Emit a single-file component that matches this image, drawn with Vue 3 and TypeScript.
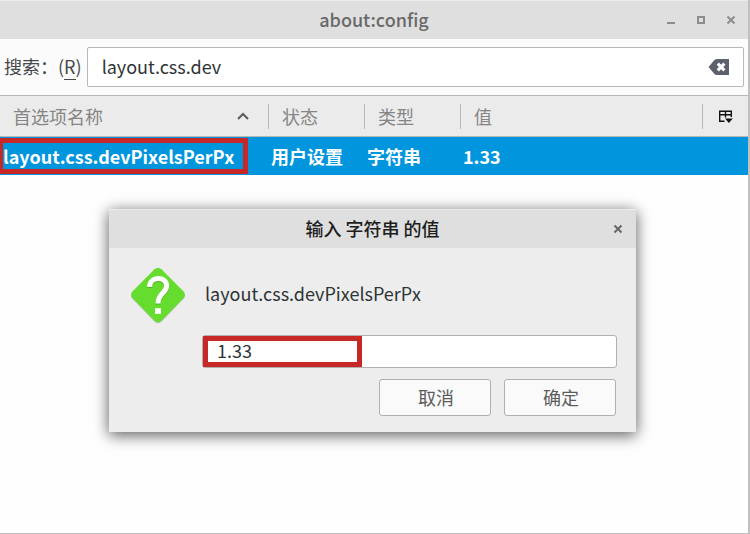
<script setup lang="ts">
import { computed, ref } from 'vue'

interface Preference {
  name: string
  status: string
  type: string
  value: string
}

const preferences: Preference[] = [
  { name: 'layout.css.devPixelsPerPx', status: '用户设置', type: '字符串', value: '1.33' },
]

const query = ref('layout.css.dev')
const draft = ref('1.33')
const visible = computed(() => preferences.filter((p) => p.name.includes(query.value)))
</script>

<template>
  <main class="window">
    <header class="titlebar">
      <h1 class="title">about:config</h1>
      <div class="controls">
        <button type="button" class="icon-button" aria-label="最小化">
          <svg width="10" height="10" viewBox="0 0 10 10"><path d="M1 8h8" /></svg>
        </button>
        <button type="button" class="icon-button" aria-label="最大化">
          <svg width="10" height="10" viewBox="0 0 10 10"><path d="M2 2h6v6H2z" /></svg>
        </button>
        <button type="button" class="icon-button" aria-label="关闭">
          <svg width="10" height="10" viewBox="0 0 10 10"><path d="M1.5 1.5l7 7M8.5 1.5l-7 7" /></svg>
        </button>
      </div>
    </header>

    <div class="toolbar">
      <label for="search" class="search-label">搜索：(<span class="key">R</span>)</label>
      <div class="search-field">
        <input id="search" v-model="query" type="text" accesskey="r" class="search-input" />
        <button type="button" class="icon-button clear" aria-label="清除" @click="query = ''">
          <svg width="22" height="16" viewBox="0 0 22 16">
            <path class="clear-shape" d="M0.5 8L6 1.6Q7 0 9 0H21V16H9Q7 16 6 14.4Z" />
            <path class="clear-cross" d="M9.8 4.6l6.6 6.8M16.4 4.6l-6.6 6.8" />
          </svg>
        </button>
      </div>
    </div>

    <div class="list">
      <table class="prefs">
        <colgroup>
          <col class="col-name" />
          <col class="col-state" />
          <col class="col-type" />
          <col />
          <col class="col-picker" />
        </colgroup>
        <thead>
          <tr>
            <th scope="col">
              <div class="head">
                首选项名称
                <svg width="12" height="8" viewBox="0 0 12 8"><path d="M1 7l5-5 5 5" /></svg>
              </div>
            </th>
            <th scope="col"><div class="head divided">状态</div></th>
            <th scope="col"><div class="head divided">类型</div></th>
            <th scope="col"><div class="head divided">值</div></th>
            <th scope="col">
              <div class="head divided picker-head">
                <button type="button" class="icon-button picker" aria-label="选择要显示的列">
                  <svg width="15" height="13" viewBox="0 0 15 13">
                    <path d="M6.5 11.3H1.7V1.3H13.3V7M1.7 4.7H13.3M7.5 1.3V7.5" />
                    <path class="arrow" d="M7 8.6h7.8L10.9 12.9z" />
                  </svg>
                </button>
              </div>
            </th>
          </tr>
        </thead>
        <tbody>
          <tr v-for="pref in visible" :key="pref.name">
            <td>{{ pref.name }}</td>
            <td>{{ pref.status }}</td>
            <td>{{ pref.type }}</td>
            <td colspan="2">{{ pref.value }}</td>
          </tr>
        </tbody>
      </table>
      <div class="mark mark-row"></div>
    </div>

    <div class="overlay">
      <form class="dialog" role="dialog" aria-labelledby="dialog-title" @submit.prevent>
        <div class="titlebar dialog-bar">
          <h2 id="dialog-title" class="title">输入 字符串 的值</h2>
          <div class="controls">
            <button type="button" class="icon-button" aria-label="关闭">
              <svg width="10" height="10" viewBox="0 0 10 10"><path d="M1.5 1.5l7 7M8.5 1.5l-7 7" /></svg>
            </button>
          </div>
        </div>
        <div class="dialog-body">
          <svg class="question" width="56" height="58" viewBox="0 0 56 58">
            <path class="shade" d="M24.5 3.3Q28 0 31.5 3.3L53.6 25.5Q56.4 29 53.6 32L31.5 54.8Q28 58 24.5 54.8L2.4 32Q-0.4 29 2.4 25.5Z" />
            <path class="diamond" d="M24.5 2.3Q28 -0.8 31.5 2.3L53.6 24.5Q56.4 28 53.6 31L31.5 53.8Q28 57 24.5 53.8L2.4 31Q-0.4 28 2.4 24.5Z" />
            <path class="hook-shade" d="M19.6 21C19.6 9.8 36.6 9.8 36.6 20C36.6 27.2 28 27.4 28 37.4" />
            <path class="hook" d="M19.6 20C19.6 8.8 36.6 8.8 36.6 19C36.6 26.2 28 26.4 28 36.4" />
            <path class="dot" d="M25 41.2h6v5.6h-6z" />
          </svg>
          <div class="fields">
            <label for="value" class="value-label">layout.css.devPixelsPerPx</label>
            <div class="value-field">
              <input id="value" v-model="draft" type="text" class="value-input" />
              <div class="mark mark-value"></div>
            </div>
            <div class="actions">
              <button type="button" class="action">取消</button>
              <button type="submit" class="action">确定</button>
            </div>
          </div>
        </div>
      </form>
    </div>
  </main>
</template>

<style>
body {
  background: #fff;
}
</style>

<style scoped>
.window,
.window * {
  box-sizing: border-box;
}

.window {
  position: relative;
  display: flex;
  flex-direction: column;
  min-height: 100vh;
  border-right: 2px solid #c0c0c0;
  border-bottom: 1px solid #c0c0c0;
  background: #fefefe;
  color: #2e3436;
  font-family: "Noto Sans CJK SC", sans-serif;
  font-size: 18px;
  line-height: 24px;
}

input,
button {
  font: inherit;
  color: inherit;
}

svg {
  display: block;
  fill: none;
  stroke: currentColor;
  stroke-width: 2;
}

.titlebar {
  position: relative;
  display: flex;
  align-items: center;
  justify-content: center;
  height: 39px;
  border-top: 1px solid #ececec;
  background: #dfdfdf;
  color: #696969;
}

.title {
  margin: 0;
  padding-bottom: 2px;
  font-size: 18px;
  font-weight: 500;
}

.controls {
  position: absolute;
  right: 12px;
  display: flex;
  gap: 20px;
  color: #8c8c8c;
}

.icon-button {
  display: block;
  padding: 0;
  border: 0;
  background: none;
}

.toolbar {
  display: flex;
  align-items: center;
  gap: 5px;
  height: 56px;
  padding: 0 4px;
  background: #fbfbfb;
}

.search-label {
  padding-bottom: 2px;
  color: #45494c;
  white-space: nowrap;
}

.key {
  border-bottom: 1px solid currentColor;
}

.search-field {
  display: flex;
  flex: 1;
  align-items: center;
  height: 40px;
  padding: 0 13px 0 14px;
  border: 1px solid #b8b8b8;
  border-radius: 2px;
  background: #fff;
}

.search-input {
  flex: 1;
  min-width: 0;
  padding: 0 0 2px;
  border: 0;
  outline: 0;
  background: none;
}

.clear-shape {
  fill: #5c616c;
  stroke: none;
}

.clear-cross {
  stroke: #fff;
  stroke-width: 3;
}

.list {
  position: relative;
}

.prefs {
  width: 100%;
  border-collapse: collapse;
  table-layout: fixed;
}

.col-name {
  width: 268px;
}

.col-state,
.col-type {
  width: 96px;
}

.col-picker {
  width: 46px;
}

th {
  height: 41px;
  padding: 0;
  border-top: 1px solid #b8b8b8;
  border-bottom: 1px solid #b8b8b8;
  background: #ebebeb;
  color: #858585;
  font-weight: 400;
  text-align: left;
}

.head {
  display: flex;
  align-items: center;
  justify-content: space-between;
  height: 25px;
  padding: 0 19px 0 13px;
}

.head svg {
  color: #5c5c5c;
}

.divided {
  border-left: 1px solid #b8b8b8;
}

.picker-head {
  padding: 0 15px;
}

.head .picker svg {
  color: #111;
  stroke-width: 1.4;
}

.picker .arrow {
  fill: currentColor;
  stroke: none;
}

td {
  height: 38px;
  padding: 0 3px;
  background: #0095dd;
  color: #fff;
  font-weight: 700;
  white-space: nowrap;
}

.mark {
  position: absolute;
  border: 5px solid #c62828;
  pointer-events: none;
}

.mark-row {
  top: 43px;
  left: -2px;
  width: 250px;
  height: 36px;
  clip-path: inset(0 0 0 2px);
}

.overlay {
  position: absolute;
  top: 209px;
  right: 112px;
  left: 109px;
}

.dialog {
  background: #ededed;
  box-shadow: 0 4px 14px rgba(0, 0, 0, 0.5), 0 0 14px rgba(0, 0, 0, 0.2);
}

.dialog-bar {
  color: #1d1d1d;
}

.dialog-bar .controls {
  right: 13px;
  color: #666;
}

.dialog-body {
  display: flex;
  gap: 15px;
  padding: 19px 19px 16px 21px;
}

.question {
  flex: none;
}

.shade {
  fill: #c2c2c2;
  stroke: none;
}

.diamond {
  fill: #66dd2e;
  stroke: none;
}

.hook,
.hook-shade {
  stroke: #fff;
  stroke-width: 5;
}

.hook-shade {
  stroke: #4eae24;
}

.dot {
  fill: #fff;
  stroke: none;
}

.fields {
  display: flex;
  flex: 1;
  flex-direction: column;
}

.value-label {
  padding: 14px 0 0 4px;
}

.value-field {
  position: relative;
  display: flex;
  margin: 30px 0 11px 1px;
}

.value-input {
  width: 100%;
  height: 33px;
  padding: 0 14px 3px;
  border: 1px solid #b0b0b0;
  border-radius: 3px;
  outline: 0;
  background: #fff;
}

.mark-value {
  top: 1px;
  left: 1px;
  width: 159px;
  height: 31px;
}

.actions {
  display: flex;
  justify-content: flex-end;
  gap: 13px;
  padding-right: 1px;
}

.action {
  width: 112px;
  height: 37px;
  padding: 0 0 2px 2px;
  border: 1px solid #b0b0b0;
  border-radius: 3px;
  background: #fafafa;
  color: #5c5c5c;
}
</style>
